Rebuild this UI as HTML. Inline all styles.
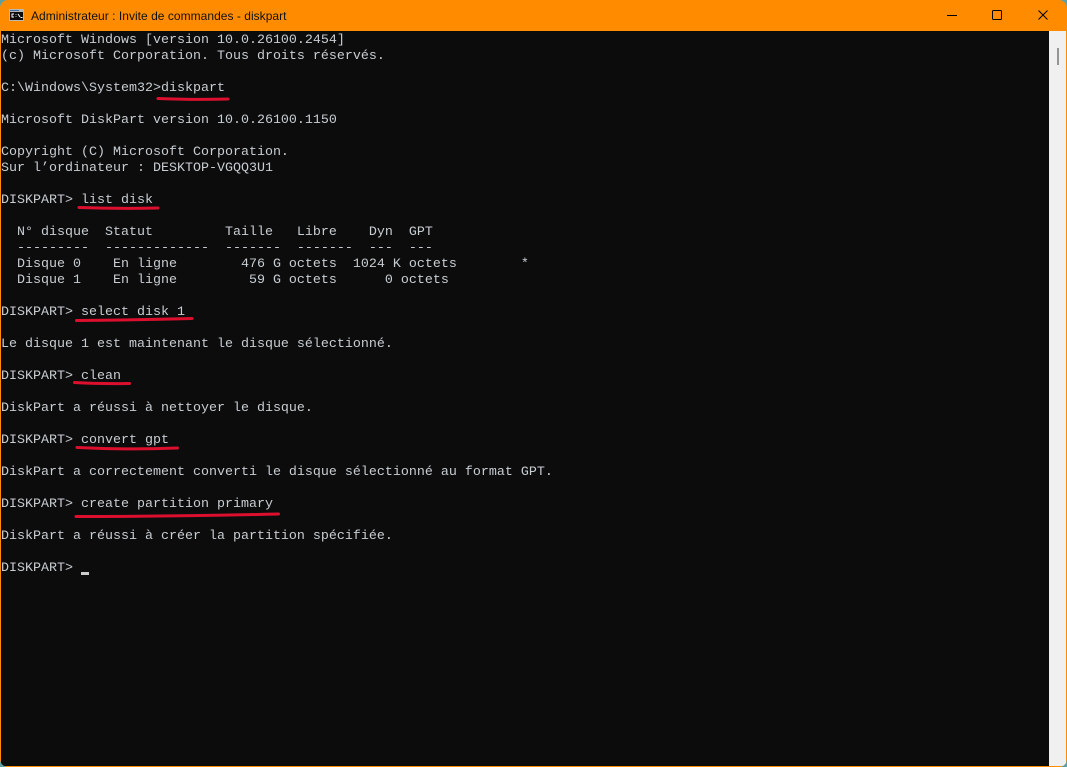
<!DOCTYPE html>
<html>
<head>
<meta charset="utf-8">
<style>
html,body{margin:0;padding:0;width:1067px;height:767px;overflow:hidden;background:#5f9ea0}
#win{position:absolute;left:0;top:0;width:1067px;height:767px;background:#ff8c00;border-radius:8px;overflow:hidden}
#term{position:absolute;left:1px;top:31px;width:1048px;height:735px;background:#0c0c0c}
#sb{position:absolute;left:1049px;top:31px;width:17px;height:735px;background:#f0f0f0}
#th{position:absolute;left:1057px;top:48px;width:2px;height:17px;background:#959595}
pre{position:absolute;left:1px;top:33px;margin:0;font:13.334px/16px "Liberation Mono",monospace;color:#c8cdd2;white-space:pre}
#title{position:absolute;left:31px;top:8px;font:12px/16px "Liberation Sans",sans-serif;color:#111;white-space:nowrap;letter-spacing:.03px}
#cur{position:absolute;left:81px;top:572px;width:8px;height:3px;background:#cccccc}
svg{position:absolute;left:0;top:0}
</style>
</head>
<body>
<div id="win">
<div id="term"></div>
<div id="sb"></div>
<div id="th"></div>
<div id="title">Administrateur : Invite de commandes - diskpart</div>
<pre>Microsoft Windows [version 10.0.26100.2454]
(c) Microsoft Corporation. Tous droits réservés.

C:\Windows\System32&gt;diskpart

Microsoft DiskPart version 10.0.26100.1150

Copyright (C) Microsoft Corporation.
Sur l’ordinateur : DESKTOP-VGQQ3U1

DISKPART&gt; list disk

  N° disque  Statut         Taille   Libre    Dyn  GPT
  ---------  -------------  -------  -------  ---  ---
  Disque 0    En ligne        476 G octets  1024 K octets        *
  Disque 1    En ligne         59 G octets      0 octets

DISKPART&gt; select disk 1

Le disque 1 est maintenant le disque sélectionné.

DISKPART&gt; clean

DiskPart a réussi à nettoyer le disque.

DISKPART&gt; convert gpt

DiskPart a correctement converti le disque sélectionné au format GPT.

DISKPART&gt; create partition primary

DiskPart a réussi à créer la partition spécifiée.

DISKPART&gt; </pre>
<div id="cur"></div>
<svg width="1067" height="767" viewBox="0 0 1067 767" fill="none">
<!-- cmd icon -->
<rect x="9" y="9" width="15" height="12" fill="#b8b8b8"/>
<rect x="10" y="12" width="13" height="8" fill="#0c0c0c"/>
<rect x="10" y="10" width="9" height="1" fill="#3a6ea5"/>
<path d="M14 14h-2v3h2M16 14v.6M16 16.4v.6M18 14l2 3M20.500 17.500h2" stroke="#fff" stroke-width="1"/>
<!-- caption buttons -->
<path d="M947 15.500h10" stroke="#000" stroke-width="1"/>
<rect x="992.500" y="10.500" width="9" height="9" rx="1" stroke="#000" stroke-width="1"/>
<path d="M1038.500 10.500l9 9M1047.500 10.500l-9 9" stroke="#000" stroke-width="1"/>
<!-- red underlines -->
<g stroke="#dc0f2e" stroke-width="3" stroke-linecap="round">
<path d="M158 98.500Q195 100 228 99"/>
<path d="M79 207.500Q120 209 158 208"/>
<path d="M76.500 320.500Q135 320 192 318.500"/>
<path d="M74.500 382.500Q100 384 129.500 383.500"/>
<path d="M77 447.500Q130 450 177.500 448"/>
<path d="M76 516.500Q180 516.500 278.500 514"/>
</g>
</svg>
</div>
</body>
</html>
